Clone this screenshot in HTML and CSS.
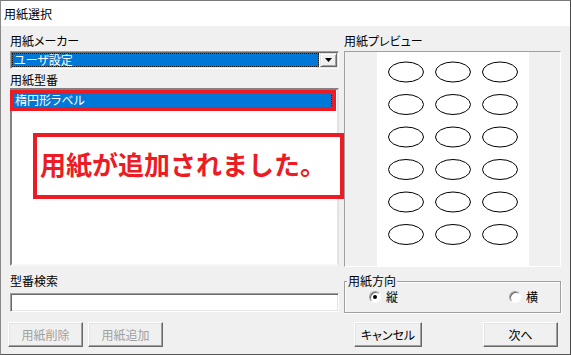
FILE: index.html
```html
<!DOCTYPE html>
<html lang="ja">
<head>
<meta charset="utf-8">
<title>用紙選択</title>
<link rel="stylesheet" href="styles.css">
</head>
<body>
<div class="window">
  <div class="titlebar">用紙選択</div>
  <div class="content">
    <div class="main">
      <div class="left">
        <div class="label">用紙メーカー</div>
        <div class="combo">
          <div class="combo-value">ユーザ設定</div>
          <div class="combo-btn">
            <svg width="7" height="4" viewBox="0 0 7 4"><polygon points="0,0 7,0 3.5,4" fill="#000"/></svg>
          </div>
        </div>
        <div class="label label-gap">用紙型番</div>
        <div class="listbox">
          <div class="list-item">楕円形ラベル</div>
          <div class="anno-item"></div>
          <div class="anno-msg">用紙が追加されました。</div>
        </div>
        <div class="label label-search">型番検索</div>
        <div class="textbox"></div>
      </div>
      <div class="right">
        <div class="label">用紙プレビュー</div>
        <div class="preview">
          <div class="paper">
            <svg width="152" height="214" viewBox="0 0 152 214">
              <g fill="none" stroke="#000" stroke-width="1">
                <ellipse cx="29" cy="20" rx="17.5" ry="10"/>
                <ellipse cx="76" cy="20" rx="17.5" ry="10"/>
                <ellipse cx="123" cy="20" rx="17.5" ry="10"/>
                <ellipse cx="29" cy="52.5" rx="17.5" ry="10"/>
                <ellipse cx="76" cy="52.5" rx="17.5" ry="10"/>
                <ellipse cx="123" cy="52.5" rx="17.5" ry="10"/>
                <ellipse cx="29" cy="85" rx="17.5" ry="10"/>
                <ellipse cx="76" cy="85" rx="17.5" ry="10"/>
                <ellipse cx="123" cy="85" rx="17.5" ry="10"/>
                <ellipse cx="29" cy="117.5" rx="17.5" ry="10"/>
                <ellipse cx="76" cy="117.5" rx="17.5" ry="10"/>
                <ellipse cx="123" cy="117.5" rx="17.5" ry="10"/>
                <ellipse cx="29" cy="150" rx="17.5" ry="10"/>
                <ellipse cx="76" cy="150" rx="17.5" ry="10"/>
                <ellipse cx="123" cy="150" rx="17.5" ry="10"/>
                <ellipse cx="29" cy="182.5" rx="17.5" ry="10"/>
                <ellipse cx="76" cy="182.5" rx="17.5" ry="10"/>
                <ellipse cx="123" cy="182.5" rx="17.5" ry="10"/>
              </g>
            </svg>
          </div>
        </div>
        <fieldset class="group">
          <legend>用紙方向</legend>
          <div class="radios">
            <div class="radio-item"><span class="radio checked"></span><span>縦</span></div>
            <div class="radio-item"><span class="radio"></span><span>横</span></div>
          </div>
        </fieldset>
      </div>
    </div>
    <div class="buttons">
      <div class="btn-group">
        <div class="btn btn-wide disabled">用紙削除</div>
        <div class="btn btn-wide disabled">用紙追加</div>
      </div>
      <div class="btn-group btn-group-right">
        <div class="btn btn-cancel">キャンセル</div>
        <div class="btn btn-wide">次へ</div>
      </div>
    </div>
  </div>
</div>
</body>
</html>
```

FILE: styles.css
```css
* { box-sizing: border-box; }

html, body {
  margin: 0;
  padding: 0;
  background: #3a3a3a;
}

body {
  font-family: "Noto Sans CJK JP", "Noto Sans", sans-serif;
  font-size: 12px;
  font-feature-settings: "palt";
  color: #000;
}

.window {
  width: 571px;
  height: 355px;
  display: flex;
  flex-direction: column;
  border-top: 1px solid #7a7a7a;
  border-left: 1px solid #8a8a8a;
  border-right: 1px solid #4a4a4a;
  border-bottom: 1px solid #555;
  background: #f0f0f0;
}

.titlebar {
  height: 25px;
  line-height: 25px;
  background: #fff;
  padding-left: 3px;
}

.content {
  flex: 1;
  padding: 7px 8px 0 9px;
  background: #f0f0f0;
}

.main {
  display: flex;
  gap: 5px;
}

.left {
  width: 329px;
  display: flex;
  flex-direction: column;
}

.right {
  width: 217px;
  display: flex;
  flex-direction: column;
}

.label {
  height: 18px;
  line-height: 16px;
}

.label-gap {
  margin-top: 3px;
  height: 16px;
}

.label-search {
  margin-top: 7px;
  height: 16px;
}

/* combo box */
.combo {
  height: 18px;
  display: flex;
  border: 1px solid;
  border-color: #a0a0a0 #fff #fff #a0a0a0;
  box-shadow: inset 1px 1px 0 #696969, inset -1px -1px 0 #e3e3e3;
  background: #fff;
  padding: 1px;
}

.combo-value {
  flex: 1;
  margin-right: 1px;
  background: #0078d7;
  color: #fff;
  outline: 1px dotted #1a1a1a;
  outline-offset: -1px;
  line-height: 14px;
  padding-left: 2px;
}

.combo-btn {
  width: 17px;
  display: flex;
  align-items: center;
  justify-content: center;
  background: #f0f0f0;
  border: 1px solid;
  border-color: #e3e3e3 #696969 #696969 #e3e3e3;
  box-shadow: inset 1px 1px 0 #fff, inset -1px -1px 0 #a0a0a0;
}

/* list box */
.listbox {
  position: relative;
  height: 178px;
  background: #fff;
  border: 2px solid;
  border-color: #828282 #e3e3e3 #f8f8f8 #828282;
}

.list-item {
  height: 17px;
  margin-top: 1px;
  margin-right: 5px;
  background: #0078d7;
  color: #fff;
  line-height: 17px;
  padding-left: 3px;
  outline: 1px dotted #1a1a1a;
  outline-offset: -1px;
}

.anno-item {
  position: absolute;
  left: -2px;
  top: 0;
  width: 326px;
  height: 21px;
  border: 4px solid #ed1c24;
}

.anno-msg {
  position: absolute;
  left: 21px;
  top: 43px;
  width: 311px;
  height: 66px;
  border: 4px solid #ed1c24;
  background: #fff;
  color: #ed1c24;
  font-weight: 700;
  font-size: 26px;
  font-feature-settings: normal;
  display: flex;
  align-items: center;
  padding: 0 0 6px 3px;
  white-space: nowrap;
}

.textbox {
  margin-top: 4px;
  height: 19px;
  background: #fff;
  border: 1px solid;
  border-color: #a0a0a0 #fff #fff #a0a0a0;
  box-shadow: inset 1px 1px 0 #696969, inset -1px -1px 0 #e3e3e3;
}

/* preview */
.preview {
  height: 216px;
  border: 1px solid;
  border-color: #a0a0a0 #fff #fff #a0a0a0;
  display: flex;
  justify-content: center;
  background: #f0f0f0;
}

.paper {
  width: 152px;
  background: #fff;
}

.paper svg { display: block; }

/* group box */
.group {
  margin: 6px 0 0 0;
  padding: 0 0 7px 2px;
  border: 1px solid #a0a0a0;
  box-shadow: 1px 1px 0 #fff, inset 1px 1px 0 #fff;
  min-width: 0;
}

.group legend {
  padding: 0 1px;
  line-height: 16px;
  background: #f0f0f0;
}

.radios {
  display: flex;
  justify-content: space-between;
  align-items: center;
  height: 16px;
  padding: 0 22px 0 22px;
}

.radio-item {
  display: flex;
  align-items: center;
  gap: 5px;
  line-height: 16px;
}

.radio {
  position: relative;
  width: 12px;
  height: 12px;
  border-radius: 50%;
  border: 1px solid;
  border-color: #a0a0a0 #fff #fff #a0a0a0;
  box-shadow: inset 1px 1px 0 #696969;
  background: #fff;
}

.radio.checked::after {
  content: "";
  position: absolute;
  left: 3px;
  top: 3px;
  width: 4px;
  height: 4px;
  border-radius: 50%;
  background: #000;
}

/* buttons */
.buttons {
  margin: 9px 4px 0 -2px;
  display: flex;
  justify-content: space-between;
}

.btn-group {
  display: flex;
  gap: 5px;
}

.btn-group-right {
  gap: 61px;
}

.btn {
  height: 25px;
  line-height: 23px;
  text-align: center;
  background: #f0f0f0;
  border: 1px solid;
  border-color: #fff #696969 #696969 #fff;
  box-shadow: inset -1px -1px 0 #a0a0a0, inset 1px 1px 0 #e3e3e3;
}

.btn-wide { width: 75px; }
.btn-cancel { width: 68px; }

.btn.disabled { color: #a0a0a0; }
```
